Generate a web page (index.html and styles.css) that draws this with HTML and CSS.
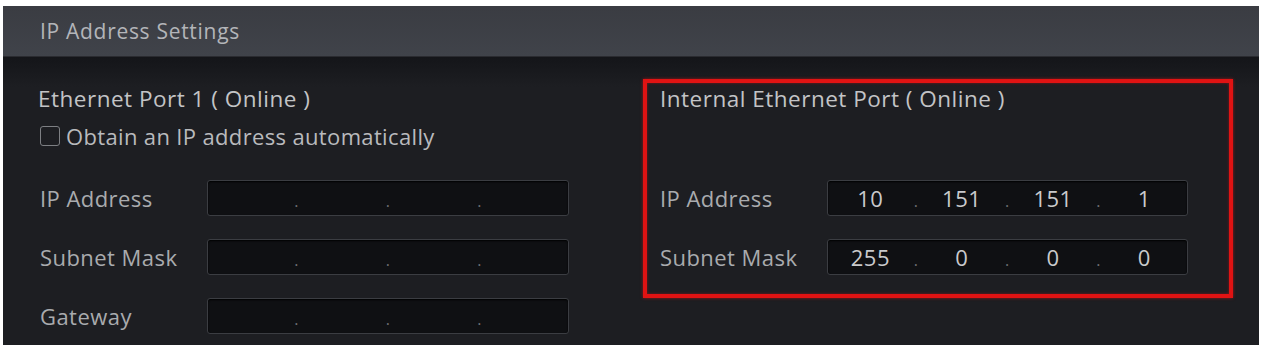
FILE: index.html
```html
<!DOCTYPE html>
<html lang="en">
<head>
    <meta charset="UTF-8">
    <meta name="viewport" content="width=device-width, initial-scale=1.0">
    <link rel="stylesheet" href="styles.css">
    <title>IP Address Settings</title>
</head>
<body>
<div class="panel">
    <div class="panel-head">IP Address Settings</div>
    <div class="panel-body">
        <div class="port">
            <div class="port-title">Ethernet Port 1 ( Online )</div>
            <label class="check-row">
                <span class="check"></span>
                <span>Obtain an IP address automatically</span>
            </label>
            <div class="fields">
                <div class="field">
                    <span class="field-label">IP Address</span>
                    <div class="ip-box">
                        <span class="seg"></span><span class="dot">.</span>
                        <span class="seg"></span><span class="dot">.</span>
                        <span class="seg"></span><span class="dot">.</span>
                        <span class="seg"></span>
                    </div>
                </div>
                <div class="field">
                    <span class="field-label">Subnet Mask</span>
                    <div class="ip-box">
                        <span class="seg"></span><span class="dot">.</span>
                        <span class="seg"></span><span class="dot">.</span>
                        <span class="seg"></span><span class="dot">.</span>
                        <span class="seg"></span>
                    </div>
                </div>
                <div class="field">
                    <span class="field-label">Gateway</span>
                    <div class="ip-box">
                        <span class="seg"></span><span class="dot">.</span>
                        <span class="seg"></span><span class="dot">.</span>
                        <span class="seg"></span><span class="dot">.</span>
                        <span class="seg"></span>
                    </div>
                </div>
            </div>
        </div>

        <div class="port port-internal">
            <div class="port-title">Internal Ethernet Port ( Online )</div>
            <div class="fields">
                <div class="field">
                    <span class="field-label">IP Address</span>
                    <div class="ip-box">
                        <span class="seg">10</span><span class="dot">.</span>
                        <span class="seg">151</span><span class="dot">.</span>
                        <span class="seg">151</span><span class="dot">.</span>
                        <span class="seg">1</span>
                    </div>
                </div>
                <div class="field">
                    <span class="field-label">Subnet Mask</span>
                    <div class="ip-box">
                        <span class="seg">255</span><span class="dot">.</span>
                        <span class="seg">0</span><span class="dot">.</span>
                        <span class="seg">0</span><span class="dot">.</span>
                        <span class="seg">0</span>
                    </div>
                </div>
            </div>
        </div>
    </div>
</div>
</body>
</html>
```

FILE: styles.css
```css
body {
    margin: 0;
    background: #ffffff;
    font-family: "Open Sans", "Noto Sans", sans-serif;
}

.panel {
    margin: 6px 3px 0 3px;
    height: 339px;
    background: #1c1d21;
    display: flex;
    flex-direction: column;
}

.panel-head {
    height: 50px;
    flex-shrink: 0;
    padding-left: 37px;
    background: linear-gradient(#3a3c42, #40434a);
    border-bottom: 1px solid #2a2b30;
    color: #b3b5b9;
    font-size: 21px;
    letter-spacing: 0.7px;
    line-height: 50px;
}

.panel-body {
    flex: 1;
    display: flex;
    background: linear-gradient(#141519, #1d1e22 30px);
}

.port {
    width: 605px;
    padding: 29px 0 0 35px;
}

.port-title {
    color: #c3c4c6;
    font-size: 22.5px;
    letter-spacing: 0.5px;
    line-height: 26px;
}

.check-row {
    display: flex;
    align-items: center;
    gap: 6px;
    margin-top: 11px;
    color: #b9babd;
    font-size: 22px;
    letter-spacing: 0.35px;
    line-height: 26px;
}

.check {
    width: 18px;
    height: 18px;
    border: 1px solid #7d7f83;
    border-radius: 3px;
    margin-left: 2px;
}

.fields {
    display: flex;
    flex-direction: column;
    gap: 23px;
    margin-top: 31px;
}

.field {
    display: flex;
    align-items: center;
    height: 36px;
}

.field-label {
    width: 167px;
    padding-left: 2px;
    color: #a9abae;
    font-size: 22px;
    letter-spacing: 0.45px;
}

.ip-box {
    width: 360px;
    height: 34px;
    display: flex;
    align-items: center;
    background: #0f1013;
    border: 1px solid #3b3d42;
    border-radius: 3px;
    box-shadow: inset 0 1px 2px #000;
    color: #c9cacc;
    font-size: 22px;
    letter-spacing: 0.5px;
}

.seg {
    flex: 1;
    text-align: center;
}

.dot {
    width: 6px;
    color: #6c6e72;
    font-size: 16px;
    text-align: center;
    padding-top: 6px;
}

.port-internal {
    box-sizing: border-box;
    width: 590px;
    height: 219px;
    margin: 22px 0 0 0;
    padding: 3px 41px 0 11px;
    border: 4px solid #e01313;
    box-shadow: 0 0 3px rgba(230, 20, 20, 0.6), inset 0 0 3px rgba(230, 20, 20, 0.5);
}

.port-internal .port-title {
    padding-left: 2px;
}

.port-internal .fields {
    margin-top: 68px;
}
```
